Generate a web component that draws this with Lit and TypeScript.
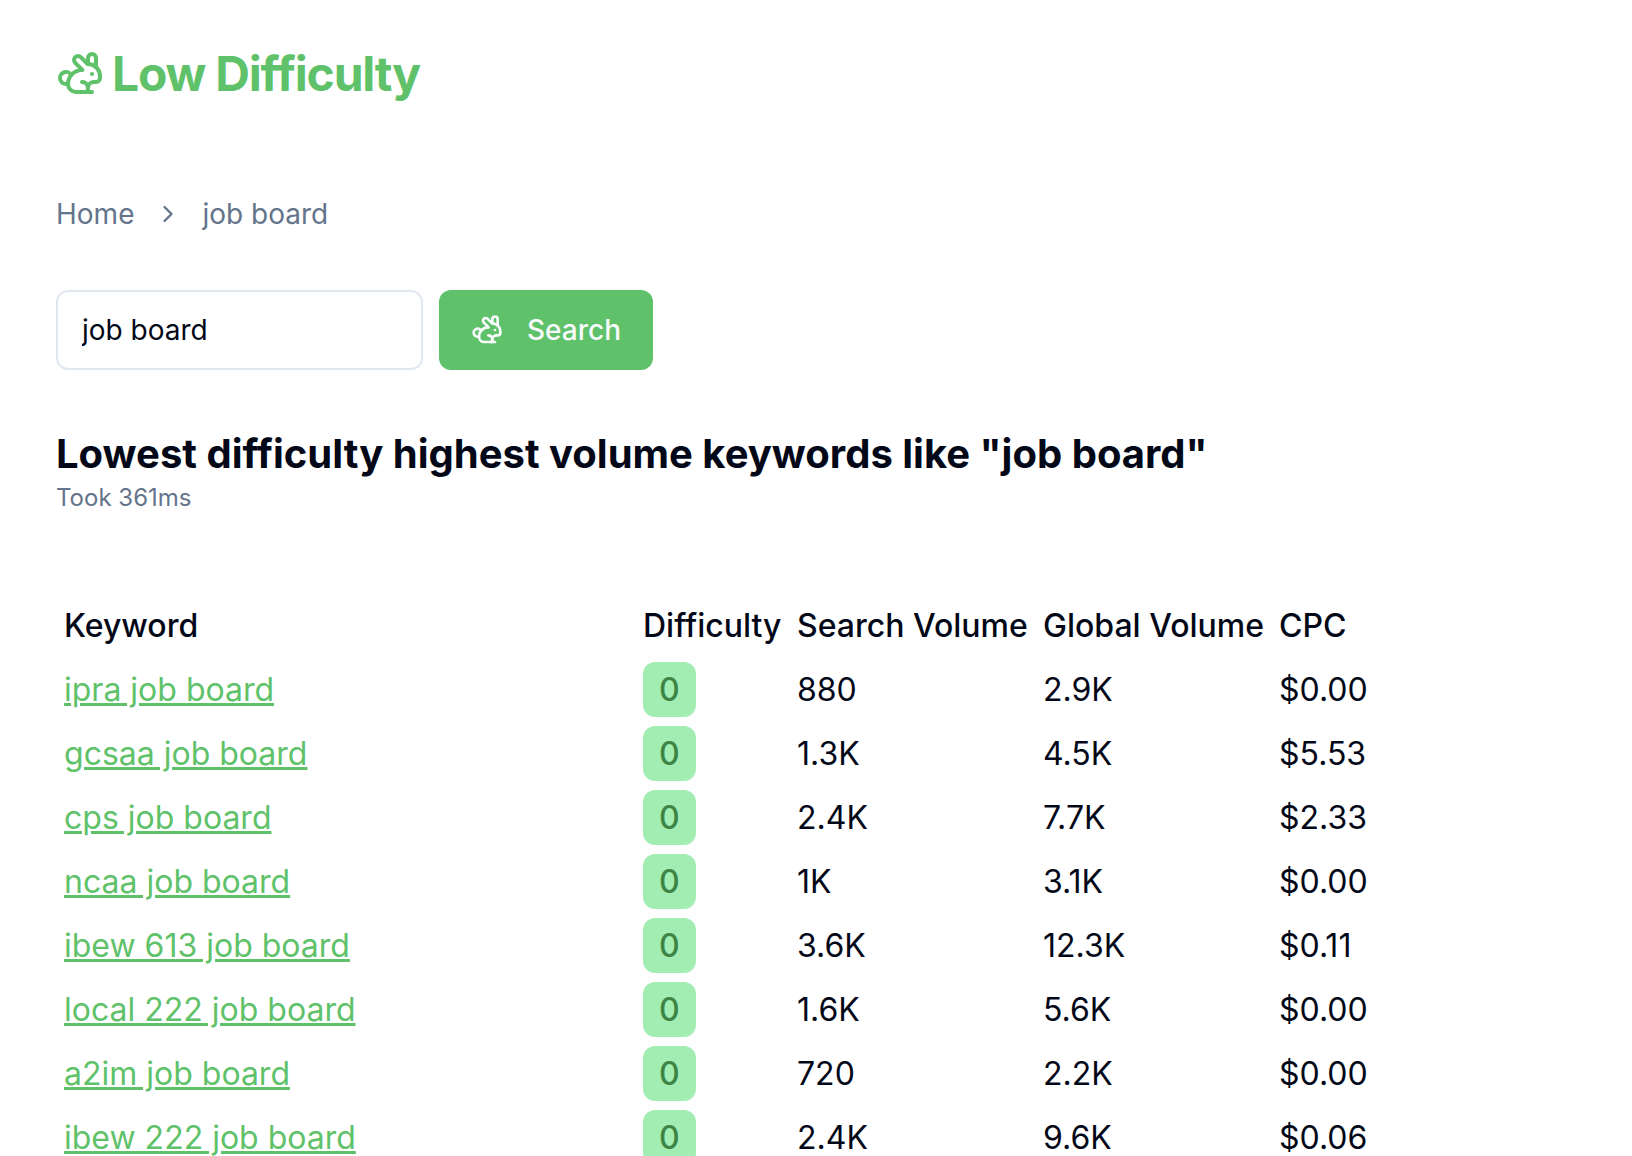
import { LitElement, html, css } from "lit";
import { customElement, property, state } from "lit/decorators.js";

interface KeywordRow {
  keyword: string;
  difficulty: number;
  volume: string;
  globalVolume: string;
  cpc: string;
}

const ROWS: KeywordRow[] = [
  { keyword: "ipra job board", difficulty: 0, volume: "880", globalVolume: "2.9K", cpc: "$0.00" },
  { keyword: "gcsaa job board", difficulty: 0, volume: "1.3K", globalVolume: "4.5K", cpc: "$5.53" },
  { keyword: "cps job board", difficulty: 0, volume: "2.4K", globalVolume: "7.7K", cpc: "$2.33" },
  { keyword: "ncaa job board", difficulty: 0, volume: "1K", globalVolume: "3.1K", cpc: "$0.00" },
  { keyword: "ibew 613 job board", difficulty: 0, volume: "3.6K", globalVolume: "12.3K", cpc: "$0.11" },
  { keyword: "local 222 job board", difficulty: 0, volume: "1.6K", globalVolume: "5.6K", cpc: "$0.00" },
  { keyword: "a2im job board", difficulty: 0, volume: "720", globalVolume: "2.2K", cpc: "$0.00" },
  { keyword: "ibew 222 job board", difficulty: 0, volume: "2.4K", globalVolume: "9.6K", cpc: "$0.06" },
];

@customElement("rabbit-icon")
export class RabbitIcon extends LitElement {
  static styles = css`
    :host {
      display: block;
      flex: none;
    }
    .icon {
      display: block;
      width: 100%;
      height: 100%;
      fill: none;
      stroke: currentColor;
      stroke-width: 2;
      stroke-linecap: round;
      stroke-linejoin: round;
    }
  `;

  render() {
    return html`
      <svg class="icon" viewBox="0 0 24 24" aria-hidden="true">
        <path d="M13 16a3 3 0 0 1 2.24 5" />
        <path d="M18 12h.01" />
        <path
          d="M18 21h-8a4 4 0 0 1-4-4 7 7 0 0 1 7-7h.2L9.6 6.4a1 1 0 1 1 2.8-2.8L15.8 7h.2c3.3 0 6 2.7 6 6v1a2 2 0 0 1-2 2h-1a3 3 0 0 0-3 3"
        />
        <path d="M20 8.54V4a2 2 0 1 0-4 0v3" />
        <path d="M7.612 12.524a3 3 0 1 0-1.6 4.3" />
      </svg>
    `;
  }
}

@customElement("keyword-table")
export class KeywordTable extends LitElement {
  @property({ attribute: false }) rows: KeywordRow[] = [];

  static styles = css`
    :host {
      display: block;
    }
    .table {
      width: 100%;
      table-layout: fixed;
      border-collapse: collapse;
      font-size: 32px;
      line-height: 48px;
      white-space: nowrap;
    }
    .head,
    .cell {
      box-sizing: border-box;
      padding: 8px;
      text-align: left;
      font-weight: 400;
    }
    .head {
      font-weight: 500;
    }
    .col-keyword {
      width: 579px;
    }
    .col-difficulty {
      width: 154px;
    }
    .col-volume {
      width: 246px;
    }
    .col-global {
      width: 236px;
    }
    .link {
      color: var(--green);
      text-decoration: underline;
    }
    .badge {
      padding: 8px 16px;
      border-radius: 12px;
      background: #a2eeb2;
      color: #3d8547;
      font-weight: 500;
    }
  `;

  render() {
    return html`
      <table class="table">
        <thead>
          <tr>
            <th class="head col-keyword" scope="col">Keyword</th>
            <th class="head col-difficulty" scope="col">Difficulty</th>
            <th class="head col-volume" scope="col">Search Volume</th>
            <th class="head col-global" scope="col">Global Volume</th>
            <th class="head" scope="col">CPC</th>
          </tr>
        </thead>
        <tbody>
          ${this.rows.map(
            (row) => html`
              <tr>
                <td class="cell"><a class="link" href="#${encodeURIComponent(row.keyword)}">${row.keyword}</a></td>
                <td class="cell"><span class="badge">${row.difficulty}</span></td>
                <td class="cell">${row.volume}</td>
                <td class="cell">${row.globalVolume}</td>
                <td class="cell">${row.cpc}</td>
              </tr>
            `
          )}
        </tbody>
      </table>
    `;
  }
}

@customElement("app-root")
export class AppRoot extends LitElement {
  @state() private query = "job board";

  static styles = css`
    :host {
      --green: #5fc26a;
      --ink: #020817;
      --muted: #64748b;
      display: block;
      box-sizing: border-box;
      min-height: 100vh;
      padding: 50px 56px 0;
      background: #fff;
      color: var(--ink);
      font-family: Inter, "Liberation Sans", sans-serif;
    }
    .brand {
      display: inline-flex;
      align-items: center;
      gap: 8px;
      color: var(--green);
      text-decoration: none;
      font-size: 48px;
      line-height: 48px;
      font-weight: 700;
      letter-spacing: -0.025em;
    }
    .brand-icon {
      width: 48px;
      height: 48px;
    }
    .header {
      display: flex;
    }
    .crumbs {
      display: flex;
      align-items: center;
      gap: 20px;
      margin-top: 96px;
      color: var(--muted);
      font-size: 28px;
      line-height: 40px;
    }
    .crumb {
      color: inherit;
      text-decoration: none;
    }
    .chevron {
      width: 28px;
      height: 28px;
      fill: none;
      stroke: currentColor;
      stroke-width: 2;
      stroke-linecap: round;
      stroke-linejoin: round;
    }
    .search {
      display: flex;
      gap: 16px;
      margin-top: 56px;
    }
    .field {
      box-sizing: border-box;
      width: 367px;
      height: 80px;
      padding: 0 24px;
      border: 2px solid #e2e8f0;
      border-radius: 12px;
      background: #fff;
      color: var(--ink);
      font: inherit;
      font-size: 28px;
    }
    .submit {
      display: flex;
      align-items: center;
      gap: 24px;
      height: 80px;
      padding: 0 32px;
      border: 0;
      border-radius: 12px;
      background: var(--green);
      color: #f8fafc;
      font: inherit;
      font-size: 28px;
      font-weight: 500;
    }
    .submit-icon {
      width: 32px;
      height: 32px;
    }
    .title {
      margin: 56px 0 0;
      font-size: 40px;
      line-height: 56px;
      font-weight: 700;
    }
    .timing {
      margin: 0 0 80px;
      color: var(--muted);
      font-size: 24px;
      line-height: 32px;
    }
  `;

  private onInput(event: Event) {
    this.query = (event.target as HTMLInputElement).value;
  }

  render() {
    return html`
      <header class="header">
        <a class="brand" href="#">
          <rabbit-icon class="brand-icon"></rabbit-icon>
          <span>Low Difficulty</span>
        </a>
      </header>
      <nav class="crumbs" aria-label="Breadcrumb">
        <a class="crumb" href="#">Home</a>
        <svg class="chevron" viewBox="0 0 24 24" aria-hidden="true"><path d="m9 18 6-6-6-6" /></svg>
        <a class="crumb" href="#job-board">job board</a>
      </nav>
      <main>
        <form class="search" @submit=${(event: Event) => event.preventDefault()}>
          <input class="field" type="text" aria-label="Keyword" .value=${this.query} @input=${this.onInput} />
          <button class="submit" type="submit">
            <rabbit-icon class="submit-icon"></rabbit-icon>
            <span>Search</span>
          </button>
        </form>
        <h1 class="title">Lowest difficulty highest volume keywords like "job board"</h1>
        <p class="timing">Took 361ms</p>
        <keyword-table .rows=${ROWS}></keyword-table>
      </main>
    `;
  }
}
